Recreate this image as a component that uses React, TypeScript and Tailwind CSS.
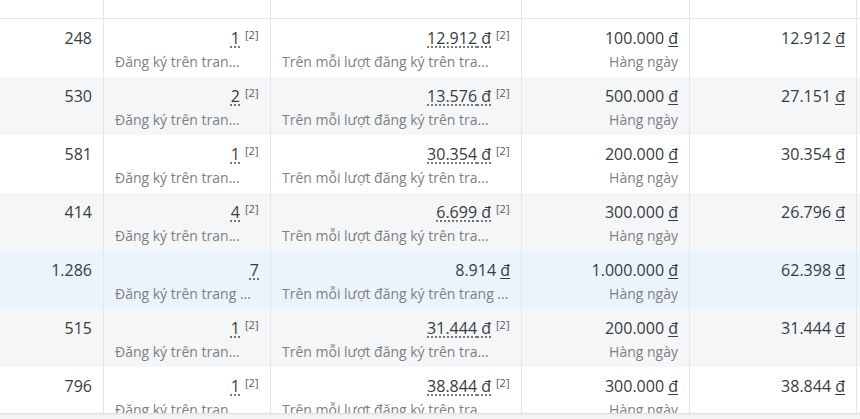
type Row = {
  reach: string;
  results: string;
  cost: string;
  budget: string;
  spent: string;
  note: boolean;
  tone: "white" | "gray" | "blue";
};

const rows: Row[] = [
  { reach: "248", results: "1", cost: "12.912", budget: "100.000", spent: "12.912", note: true, tone: "white" },
  { reach: "530", results: "2", cost: "13.576", budget: "500.000", spent: "27.151", note: true, tone: "gray" },
  { reach: "581", results: "1", cost: "30.354", budget: "200.000", spent: "30.354", note: true, tone: "white" },
  { reach: "414", results: "4", cost: "6.699", budget: "300.000", spent: "26.796", note: true, tone: "gray" },
  { reach: "1.286", results: "7", cost: "8.914", budget: "1.000.000", spent: "62.398", note: false, tone: "blue" },
  { reach: "515", results: "1", cost: "31.444", budget: "200.000", spent: "31.444", note: true, tone: "gray" },
  { reach: "796", results: "1", cost: "38.844", budget: "300.000", spent: "38.844", note: true, tone: "white" },
];

const toneClass = {
  white: "bg-white",
  gray: "bg-[#f4f6f7]",
  blue: "bg-[#ebf3fd]",
};

function Sup() {
  return <span className="ml-[5px] mt-[1px] w-[14px] shrink-0 self-start text-[11px] leading-[14px] text-[#55595e]">[2]</span>;
}

function Cell({ w, children }: { w: string; children: React.ReactNode }) {
  return <div className={`${w} shrink-0 border-r border-[#e4e6e9] px-[11px] pt-[8px]`}>{children}</div>;
}

function Main({ children, dotted }: { children: React.ReactNode; dotted?: boolean }) {
  return (
    <div className="text-right text-[16px] leading-[22px] text-[#383c40]">
      <span className={dotted ? "underline decoration-dotted decoration-[#55595e] underline-offset-[3px]" : ""}>{children}</span>
    </div>
  );
}

function Sub({ children, right }: { children: React.ReactNode; right?: boolean }) {
  return (
    <div className={`mt-[3px] overflow-hidden whitespace-nowrap text-[14px] leading-[20px] text-[#7d8085] ${right ? "text-right" : "text-left"}`}>
      {children}
    </div>
  );
}

function Dong() {
  return <span className="underline underline-offset-[2px]">đ</span>;
}

export default function App() {
  return (
    <div
      className="relative h-[419px] w-[860px] overflow-hidden bg-white"
      style={{ fontFamily: '"Open Sans", "Noto Sans", sans-serif' }}
    >
      <div className="flex h-[19px] border-b border-[#e4e6e9]">
        <div className="w-[104px] shrink-0 border-r border-[#e4e6e9]" />
        <div className="w-[167px] shrink-0 border-r border-[#e4e6e9]" />
        <div className="w-[251px] shrink-0 border-r border-[#e4e6e9]" />
        <div className="w-[168px] shrink-0 border-r border-[#e4e6e9]" />
        <div className="w-[167px] shrink-0 border-r border-[#e4e6e9]" />
      </div>
      {rows.map((r, i) => (
        <div key={i} className={`flex h-[58px] ${toneClass[r.tone]}`}>
          <Cell w="w-[104px]">
            <Main>{r.reach}</Main>
          </Cell>
          <Cell w="w-[167px]">
            <div className="flex">
              <div className="min-w-0 flex-1">
                <Main dotted>{r.results}</Main>
                <Sub>{r.note ? "Đăng ký trên tran..." : "Đăng ký trên trang ..."}</Sub>
              </div>
              {r.note && <Sup />}
            </div>
          </Cell>
          <Cell w="w-[251px]">
            <div className="flex">
              <div className="min-w-0 flex-1">
                {r.note ? (
                  <Main dotted>{r.cost} đ</Main>
                ) : (
                  <Main>
                    {r.cost} <Dong />
                  </Main>
                )}
                <Sub>{r.note ? "Trên mỗi lượt đăng ký trên tra..." : "Trên mỗi lượt đăng ký trên trang ..."}</Sub>
              </div>
              {r.note && <Sup />}
            </div>
          </Cell>
          <Cell w="w-[168px]">
            <Main>
              {r.budget} <Dong />
            </Main>
            <Sub right>Hàng ngày</Sub>
          </Cell>
          <Cell w="w-[167px]">
            <Main>
              {r.spent} <Dong />
            </Main>
          </Cell>
        </div>
      ))}
      <div className="absolute bottom-0 left-0 h-[6px] w-full border-t border-[#dcdfe3] bg-gradient-to-b from-[#eceef0] to-[#f7f8f9]" />
    </div>
  );
}
